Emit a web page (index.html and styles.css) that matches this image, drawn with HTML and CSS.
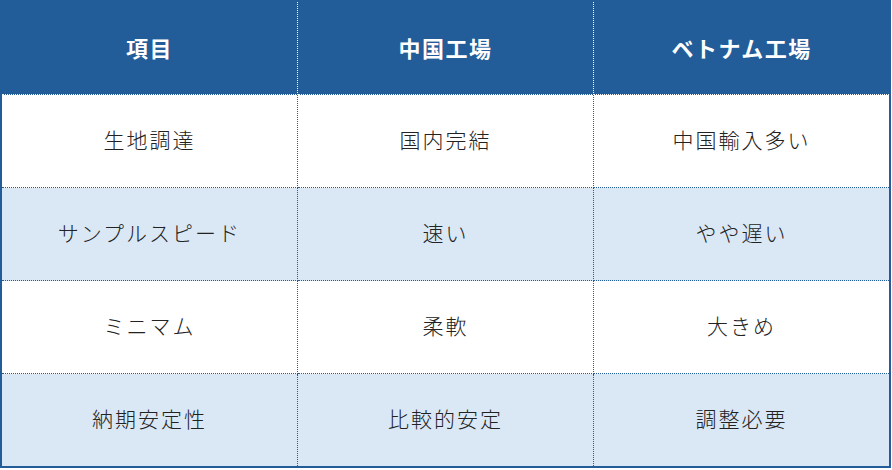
FILE: index.html
```html
<!DOCTYPE html>
<html lang="ja">
<head>
<meta charset="utf-8">
<link rel="stylesheet" href="styles.css">
</head>
<body>
<table class="compare">
  <thead>
    <tr>
      <th>項目</th>
      <th>中国工場</th>
      <th>ベトナム工場</th>
    </tr>
  </thead>
  <tbody>
    <tr>
      <td>生地調達</td>
      <td>国内完結</td>
      <td>中国輸入多い</td>
    </tr>
    <tr class="alt">
      <td>サンプルスピード</td>
      <td>速い</td>
      <td>やや遅い</td>
    </tr>
    <tr>
      <td>ミニマム</td>
      <td>柔軟</td>
      <td>大きめ</td>
    </tr>
    <tr class="alt">
      <td>納期安定性</td>
      <td>比較的安定</td>
      <td>調整必要</td>
    </tr>
  </tbody>
</table>
</body>
</html>
```
FILE: styles.css
```css
html, body {
  margin: 0;
  padding: 0;
  background: #ffffff;
}
.compare {
  width: 891px;
  border-collapse: collapse;
  border: 2px solid #225c99;
  table-layout: fixed;
  font-family: "Noto Sans CJK JP", "Noto Sans", sans-serif;
}
.compare th {
  height: 90px;
  background: #225c99;
  color: #ffffff;
  font-size: 22px;
  font-weight: 700;
  letter-spacing: 1.5px;
  line-height: 1;
  text-align: center;
  border: 1px dotted #ffffff;
  padding: 0 0 2px 0;
}
.compare td {
  height: 89px;
  color: #222222;
  font-size: 21px;
  font-weight: 300;
  letter-spacing: 2px;
  line-height: 1;
  text-align: center;
  border: 1px dotted #225c99;
  padding: 0 0 3px 0;
  background: #ffffff;
}
.compare tr.alt td {
  background: #dae8f6;
}
```
